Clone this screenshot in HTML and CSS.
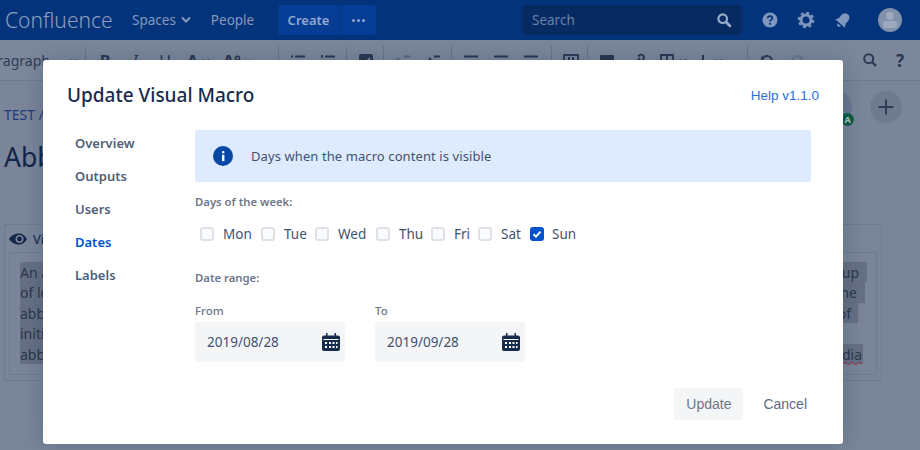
FILE: index.html
```html
<!DOCTYPE html>
<html lang="en">
<head>
<meta charset="utf-8">
<title>Update Visual Macro</title>
<link rel="stylesheet" href="styles.css">
</head>
<body>
<div class="page">
  <header class="topbar">
    <span class="logo">Confluence</span>
    <nav class="topnav">
      <span class="topnav-item">Spaces <svg class="chev" width="10" height="10" viewBox="0 0 10 10"><path d="M1.5 3 5 6.500 8.500 3" fill="none" stroke="currentColor" stroke-width="2" stroke-linecap="round"/></svg></span>
      <span class="topnav-item">People</span>
    </nav>
    <div class="create-group">
      <span class="create-btn">Create</span>
      <span class="more-btn"><i></i><i></i><i></i></span>
    </div>
    <div class="search">
      <span>Search</span>
      <svg width="16" height="16" viewBox="0 0 16 16"><circle cx="6.700" cy="6.700" r="4.300" fill="none" stroke="currentColor" stroke-width="2.200"/><path d="M10 10l4 4" stroke="currentColor" stroke-width="2.600" stroke-linecap="round"/></svg>
    </div>
    <div class="top-icons">
      <svg width="16" height="16" viewBox="0 0 16 16"><circle cx="8" cy="8" r="7.500" fill="currentColor"/><path d="M5.700 6.200C5.800 4.800 6.800 4.100 8 4.100c1.400 0 2.400.8 2.400 2 0 1.900-2.400 1.700-2.400 3.400" fill="none" stroke="#03337a" stroke-width="1.700"/><circle cx="8" cy="11.800" r="1.100" fill="#03337a"/></svg>
      <svg width="18" height="18" viewBox="0 0 18 18"><circle cx="9" cy="9" r="5" fill="none" stroke="currentColor" stroke-width="3"/><circle cx="9" cy="9" r="7.200" fill="none" stroke="currentColor" stroke-width="2.200" stroke-dasharray="3 2.650"/></svg>
      <svg width="18" height="18" viewBox="0 0 18 18"><g transform="rotate(40 9 9)"><path d="M9 1.500c-3 0-4.500 2.300-4.500 5v4L2.500 13.500h13l-2-3v-4c0-2.700-1.500-5-4.500-5z" fill="currentColor"/><path d="M7 15h4a2 2 0 0 1-4 0z" fill="currentColor"/></g></svg>
      <span class="avatar"><i class="avatar-head"></i><i class="avatar-body"></i></span>
    </div>
  </header>

  <div class="toolbar">
    <div class="tb-group tb-para"><span class="para-text">Paragraph</span><svg class="tb-caret" width="10" height="10" viewBox="0 0 10 10"><path d="M2 3.500 5 6.500 8 3.500" fill="none" stroke="currentColor" stroke-width="1.600"/></svg></div>
    <div class="tb-group tb-w193">
      <span class="tb-btn tb-b">B</span><span class="tb-btn tb-i">I</span><span class="tb-btn tb-u">U</span>
      <span class="tb-btn tb-wide tb-b">A<svg class="tb-caret" width="10" height="10" viewBox="0 0 10 10"><path d="M2 3.500 5 6.500 8 3.500" fill="none" stroke="currentColor" stroke-width="1.600"/></svg></span>
      <span class="tb-btn tb-wide tb-b">A°<svg class="tb-caret" width="10" height="10" viewBox="0 0 10 10"><path d="M2 3.500 5 6.500 8 3.500" fill="none" stroke="currentColor" stroke-width="1.600"/></svg></span>
    </div>
    <div class="tb-group tb-w68">
      <span class="tb-btn"><svg width="16" height="16" viewBox="0 0 16 16"><path d="M5 3.500h10M5 8h10M5 12.500h10M1 3.500h2M1 8h2M1 12.500h2" stroke="currentColor" stroke-width="1.800"/></svg></span>
      <span class="tb-btn"><svg width="16" height="16" viewBox="0 0 16 16"><path d="M5 3.500h10M5 8h10M5 12.500h10M2 2v3M1 8h2M1 12.500h2" stroke="currentColor" stroke-width="1.800"/></svg></span>
    </div>
    <div class="tb-group tb-w37">
      <span class="tb-btn"><svg width="16" height="16" viewBox="0 0 16 16"><rect x="1" y="1" width="14" height="14" rx="2" fill="currentColor"/><path d="M4 8l3 3 5-6" fill="none" stroke="#7a8599" stroke-width="2"/></svg></span>
    </div>
    <div class="tb-group tb-w68">
      <span class="tb-btn tb-dim"><svg width="16" height="16" viewBox="0 0 16 16"><path d="M9 3.500h6M9 8h6M9 12.500h6M7 8H1M4 5 1 8l3 3" fill="none" stroke="currentColor" stroke-width="1.800"/></svg></span>
      <span class="tb-btn"><svg width="16" height="16" viewBox="0 0 16 16"><path d="M9 3.500h6M9 8h6M9 12.500h6M1 8h6M4 5l3 3-3 3" fill="none" stroke="currentColor" stroke-width="1.800"/></svg></span>
    </div>
    <div class="tb-group tb-w100">
      <span class="tb-btn"><svg width="16" height="16" viewBox="0 0 16 16"><path d="M1 3.500h14M1 8h10M1 12.500h14" stroke="currentColor" stroke-width="1.800"/></svg></span>
      <span class="tb-btn"><svg width="16" height="16" viewBox="0 0 16 16"><path d="M1 3.500h14M3 8h10M1 12.500h14" stroke="currentColor" stroke-width="1.800"/></svg></span>
      <span class="tb-btn"><svg width="16" height="16" viewBox="0 0 16 16"><path d="M1 3.500h14M5 8h10M1 12.500h14" stroke="currentColor" stroke-width="1.800"/></svg></span>
    </div>
    <div class="tb-group tb-w36">
      <span class="tb-btn"><svg width="16" height="16" viewBox="0 0 16 16"><rect x="1" y="2" width="14" height="12" fill="none" stroke="currentColor" stroke-width="1.800"/><path d="M6 4v8M10 4v8" stroke="currentColor" stroke-width="2"/></svg></span>
    </div>
    <div class="tb-group tb-w160">
      <span class="tb-btn"><svg width="16" height="16" viewBox="0 0 16 16"><rect x="1" y="2" width="14" height="12" rx="1" fill="currentColor"/></svg></span>
      <span class="tb-btn"><svg width="16" height="16" viewBox="0 0 16 16"><path d="M7 9l4-4M9 3.500l1-1a2.800 2.800 0 0 1 4 4l-2 2M7 12.500l-1 1a2.800 2.800 0 0 1-4-4l2-2" fill="none" stroke="currentColor" stroke-width="1.800"/></svg></span>
      <span class="tb-btn tb-wide"><svg width="16" height="16" viewBox="0 0 16 16"><path d="M2 2h12v12H2zM2 8h12M8 2v12" fill="none" stroke="currentColor" stroke-width="1.800"/></svg><svg class="tb-caret" width="10" height="10" viewBox="0 0 10 10"><path d="M2 3.500 5 6.500 8 3.500" fill="none" stroke="currentColor" stroke-width="1.600"/></svg></span>
      <span class="tb-btn tb-wide"><svg width="16" height="16" viewBox="0 0 16 16"><path d="M8 2v12M2 8h12" stroke="currentColor" stroke-width="2"/></svg><svg class="tb-caret" width="10" height="10" viewBox="0 0 10 10"><path d="M2 3.500 5 6.500 8 3.500" fill="none" stroke="currentColor" stroke-width="1.600"/></svg></span>
    </div>
    <div class="tb-group tb-last">
      <span class="tb-btn"><svg width="16" height="16" viewBox="0 0 16 16"><path d="M3 8a5 5 0 1 1 2 4M3 3.500V8h4.500" fill="none" stroke="currentColor" stroke-width="1.800"/></svg></span>
      <span class="tb-btn tb-faint"><svg width="16" height="16" viewBox="0 0 16 16"><path d="M13 8a5 5 0 1 0-2 4M13 3.500V8H8.500" fill="none" stroke="currentColor" stroke-width="1.800"/></svg></span>
    </div>
    <div class="tb-right">
      <span class="tb-btn"><svg width="16" height="16" viewBox="0 0 16 16"><circle cx="6.700" cy="6.700" r="4.500" fill="none" stroke="currentColor" stroke-width="2"/><path d="M10 10l4 4" stroke="currentColor" stroke-width="2.400"/></svg></span>
      <span class="tb-btn tb-b tb-q">?</span>
    </div>
  </div>

  <main class="content">
    <div class="crumb-row">
      <span class="crumbs">TEST /</span>
      <div class="people">
        <span class="user"><span class="user-badge">A</span></span>
        <span class="add-user"><svg width="18" height="18" viewBox="0 0 18 18"><path d="M9 1.500v15M1.500 9h15" stroke="currentColor" stroke-width="2"/></svg></span>
      </div>
    </div>
    <h1 class="page-title">Abbreviation</h1>
    <section class="macro">
      <div class="macro-head">
        <svg width="18" height="12" viewBox="0 0 18 12"><path d="M0 6C3 2 6 .5 10 .5S16 3 18 6c-2 3-4 5.500-8 5.500S3 10 0 6z" fill="#14264a"/><circle cx="10.500" cy="6" r="4" fill="#7a8599"/><circle cx="10.500" cy="6" r="2.400" fill="#14264a"/></svg>
        <span>Visual Macro</span>
      </div>
      <div class="macro-body">
        <p class="hl l1"><span>An abbreviation</span><span>up</span></p>
        <p class="hl l2"><span>of letters</span><span>the</span></p>
        <p class="hl l3"><span>abbreviation</span><span>of</span></p>
        <p class="hl l4"><span>initial letters</span></p>
        <p class="hl l5"><span>abbreviated</span><span class="spell">Wikipedia</span></p>
      </div>
    </section>
  </main>
</div>

<div class="modal">
  <div class="modal-head">
    <h2 class="modal-title">Update Visual Macro</h2>
    <a class="help">Help v1.1.0</a>
  </div>
  <div class="modal-body">
    <ul class="side">
      <li>Overview</li>
      <li>Outputs</li>
      <li>Users</li>
      <li class="active">Dates</li>
      <li>Labels</li>
    </ul>
    <div class="panel">
      <div class="alert">
        <svg width="20" height="20" viewBox="0 0 20 20"><circle cx="10" cy="10" r="10" fill="#0747a6"/><rect x="9" y="5" width="2.400" height="2.400" rx="1" fill="#fff"/><rect x="9" y="8.800" width="2.400" height="6.400" fill="#fff"/></svg>
        <span>Days when the macro content is visible</span>
      </div>
      <div class="section-label">Days of the week:</div>
      <div class="days">
        <label class="day d-mon"><i class="box"></i>Mon</label>
        <label class="day d-tue"><i class="box"></i>Tue</label>
        <label class="day d-wed"><i class="box"></i>Wed</label>
        <label class="day d-thu"><i class="box"></i>Thu</label>
        <label class="day d-fri"><i class="box"></i>Fri</label>
        <label class="day d-sat"><i class="box"></i>Sat</label>
        <label class="day d-sun"><i class="box checked"><svg width="14" height="14" viewBox="0 0 14 14"><path d="M3.500 7.200l2.500 2.400 4.500-5" fill="none" stroke="#fff" stroke-width="2"/></svg></i>Sun</label>
      </div>
      <div class="section-label range-label">Date range:</div>
      <div class="dates">
        <div class="field">
          <div class="field-label">From</div>
          <div class="input"><span>2019/08/28</span>
            <svg class="cal" width="18" height="18" viewBox="0 0 18 18"><path d="M4 0h1.500v2.500h7V0H14v2.500h2a2 2 0 0 1 2 2V16a2 2 0 0 1-2 2H2a2 2 0 0 1-2-2V4.500a2 2 0 0 1 2-2h2z" fill="#172b4d"/><path d="M1.500 6.500h15" stroke="#fff"/><path d="M3 9h2v2H3zM7 9h2v2H7zM10.500 9h2v2h-2zM14 9h1.500v2H14zM3 13h2v2H3zM7 13h2v2H7zM10.500 13h2v2h-2zM14 13h1.500v2H14z" fill="#fff"/></svg>
          </div>
        </div>
        <div class="field">
          <div class="field-label">To</div>
          <div class="input"><span>2019/09/28</span>
            <svg class="cal" width="18" height="18" viewBox="0 0 18 18"><path d="M4 0h1.500v2.500h7V0H14v2.500h2a2 2 0 0 1 2 2V16a2 2 0 0 1-2 2H2a2 2 0 0 1-2-2V4.500a2 2 0 0 1 2-2h2z" fill="#172b4d"/><path d="M1.500 6.500h15" stroke="#fff"/><path d="M3 9h2v2H3zM7 9h2v2H7zM10.500 9h2v2h-2zM14 9h1.500v2H14zM3 13h2v2H3zM7 13h2v2H7zM10.500 13h2v2h-2zM14 13h1.500v2H14z" fill="#fff"/></svg>
          </div>
        </div>
      </div>
    </div>
  </div>
  <div class="modal-foot">
    <span class="btn btn-update">Update</span>
    <span class="btn btn-cancel">Cancel</span>
  </div>
</div>
</body>
</html>
```

FILE: styles.css
```css
* { box-sizing: border-box; }
html, body { margin: 0; padding: 0; height: 450px; overflow: hidden; }
body { font-family: "Noto Sans", "Open Sans", sans-serif; background: #7a8599; color: #14264a; }
.page { width: 920px; height: 450px; overflow: hidden; }

/* top bar */
.topbar { height: 40px; background: #03337a; display: flex; align-items: center; color: #8499bc; padding-left: 5px; }
.logo { font-size: 21px; width: 127px; color: #8d9fbf; font-weight: 300; }
.topnav { display: flex; align-items: center; width: 146px; font-size: 13.5px; }
.topnav-item { margin-right: 20px; display: flex; align-items: center; gap: 5px; }
.create-group { display: flex; height: 30px; gap: 1px; width: 98px; }
.create-btn { width: 61px; background: #053c94; border-radius: 3px 0 0 3px; color: #94a9cc; font-size: 13px; font-weight: 600; display: flex; align-items: center; justify-content: center; }
.more-btn { width: 36px; background: #053c94; border-radius: 0 3px 3px 0; display: flex; align-items: center; justify-content: center; gap: 2px; }
.more-btn i { width: 3px; height: 3px; border-radius: 50%; background: #94a9cc; }
.search { margin-left: 146px; width: 220px; height: 30px; background: #072a62; border-radius: 3px; display: flex; align-items: center; justify-content: space-between; padding: 0 10px; font-size: 13.5px; color: #6b80a6; }
.search svg { color: #98abc9; }
.top-icons { display: flex; align-items: center; margin-left: 20px; color: #7f96bd; }
.top-icons svg:nth-child(1) { margin-right: 19px; }
.top-icons svg:nth-child(2) { margin-right: 19px; }
.avatar { margin-left: 26px; width: 24px; height: 24px; border-radius: 50%; background: #8190ab; position: relative; overflow: hidden; display: block; }
.avatar-head { position: absolute; left: 8px; top: 4px; width: 8px; height: 8px; border-radius: 50%; background: #9ca9bf; }
.avatar-body { position: absolute; left: 5px; top: 13px; width: 14px; height: 7px; border-radius: 2px; background: #9ca9bf; }

/* toolbar */
.toolbar { height: 41px; display: flex; align-items: center; border-bottom: 1px solid #6e798e; color: #2a3853; background: #7c879b; }
.tb-group { height: 28px; display: flex; align-items: center; padding-left: 4px; padding-top: 1px; border-right: 1px solid #68748a; }
.tb-para { width: 86px; padding-left: 0; font-size: 14px; color: #2f3c55; }
.para-text { margin-left: -19px; width: 87px; flex: none; }
.tb-w193 { width: 193px; }
.tb-w68 { width: 68px; }
.tb-w37 { width: 37px; }
.tb-w100 { width: 100px; }
.tb-w36 { width: 36px; }
.tb-w160 { width: 160px; }
.tb-last { border-right: 0; }
.tb-right { margin-left: auto; display: flex; padding-right: 5px; }
.tb-btn { width: 30px; height: 28px; flex: none; display: flex; align-items: center; justify-content: center; font-size: 16px; line-height: 1; }
.tb-wide { width: 36px; justify-content: flex-start; padding-left: 7px; gap: 3px; }
.tb-b { font-weight: 700; }
.tb-i { font-style: italic; }
.tb-u { text-decoration: underline; }
.tb-dim { color: #5b677e; }
.tb-faint { color: #6b7689; }
.tb-q { font-size: 17px; }

/* content */
.content { padding: 0 38px 0 4px; }
.crumb-row { height: 60px; display: flex; align-items: flex-start; justify-content: space-between; padding-top: 10px; }
.crumbs { font-size: 14px; line-height: 28px; margin-top: 10px; color: #1f3b78; }
.people { display: flex; gap: 18px; margin-right: -20px; }
.user { width: 32px; height: 32px; border-radius: 50%; background: #69768f; position: relative; display: block; }
.user-badge { position: absolute; right: -2px; bottom: -3px; width: 13px; height: 13px; border-radius: 50%; background: #0f5d47; color: #b9c6c9; font-size: 9px; font-weight: 700; line-height: 13px; text-align: center; }
.add-user { width: 32px; height: 32px; border-radius: 50%; background: #6f7a8e; color: #2f3c55; display: flex; align-items: center; justify-content: center; }
.page-title { margin: 0; font-size: 26.5px; font-weight: 400; line-height: 32px; color: #14264a; height: 83px; }
.macro { width: 878px; height: 157px; border: 1px solid #6f7a8f; padding: 0 4px 5px 4px; display: flex; flex-direction: column; }
.macro-head { height: 27px; display: flex; align-items: center; gap: 6px; font-size: 13px; color: #14264a; }
.macro-body { flex: 1; border: 1px solid #6f7a8f; padding: 9px 0 0 10px; }
.hl { margin: 0; height: 20.4px; padding-top: 2px; background: #667084; font-size: 14px; line-height: 18.4px; color: #2c374d; display: flex; justify-content: space-between; }
.l1 { width: 847px; padding-right: 8px; }
.l2 { width: 845px; padding-right: 8px; }
.l3 { width: 838px; padding-right: 7px; }
.l4 { width: 700px; }
.l5 { width: 843px; padding-right: 1px; }
.spell { text-decoration: underline wavy #a3273f; text-decoration-thickness: 1px; }

/* dialog */
.modal { position: absolute; left: 43px; top: 60px; width: 800px; height: 384px; background: #fff; border-radius: 3px; box-shadow: 0 0 22px rgba(9, 30, 66, .22); display: flex; flex-direction: column; }
.modal-head { height: 70px; padding: 0 24px; display: flex; align-items: center; justify-content: space-between; }
.modal-title { margin: 0; font-size: 19px; font-weight: 500; color: #172b4d; }
.help { font-family: "Liberation Sans", Arial, sans-serif; font-size: 13.5px; color: #2a6fdb; }
.modal-body { display: flex; flex: 1; padding-right: 32px; }
.side { list-style: none; margin: 0; padding: 0 0 0 32px; width: 152px; font-size: 13px; font-weight: 600; color: #505f79; }
.side li { height: 33px; line-height: 26px; }
.side .active { color: #0052cc; }
.panel { flex: 1; }
.alert { height: 52px; background: #deebff; border-radius: 3px; display: flex; align-items: center; gap: 18px; padding-left: 18px; font-size: 13px; letter-spacing: .09px; color: #42526e; }
.section-label { font-size: 11.3px; font-weight: 600; color: #6b778c; margin-top: 11px; line-height: 17px; }
.range-label { margin-top: 0; }
.days { display: flex; align-items: center; height: 26px; margin: 11px 0 22px; padding-left: 5px; font-size: 13.5px; color: #42526e; }
.day { display: flex; align-items: center; gap: 9px; margin-right: 9px; }
.d-mon { width: 52px; }
.d-tue { width: 45px; }
.d-wed { width: 52px; }
.d-thu { width: 46px; }
.d-fri { width: 38px; }
.d-sat { width: 43px; }
.d-sun { gap: 8px; }
.box { width: 14px; height: 14px; flex: none; border: 2px solid #dfe1e6; border-radius: 3px; background: #fafbfc; display: block; position: relative; }
.box.checked { background: #0052cc; border: 0; }
.box svg { display: block; }
.dates { display: flex; gap: 30px; margin-top: 16px; }
.field { width: 150px; }
.field-label { font-size: 11.5px; font-weight: 500; line-height: 17px; color: #6b778c; margin-bottom: 3px; }
.input { height: 40px; background: #f4f5f7; border-radius: 3px; display: flex; align-items: center; justify-content: space-between; padding: 0 5px 0 12px; font-size: 13.5px; color: #42526e; }
.modal-foot { height: 56px; padding: 0 24px 24px 0; display: flex; justify-content: flex-end; font-family: "Liberation Sans", Arial, sans-serif; font-size: 14px; }
.btn { height: 32px; display: flex; align-items: center; padding: 0 12px; border-radius: 3px; }
.btn-update { width: 69px; justify-content: center; padding: 0; margin-right: 8px; background: #f4f5f7; color: #6b778c; }
.btn-cancel { color: #5e6c84; }
```
